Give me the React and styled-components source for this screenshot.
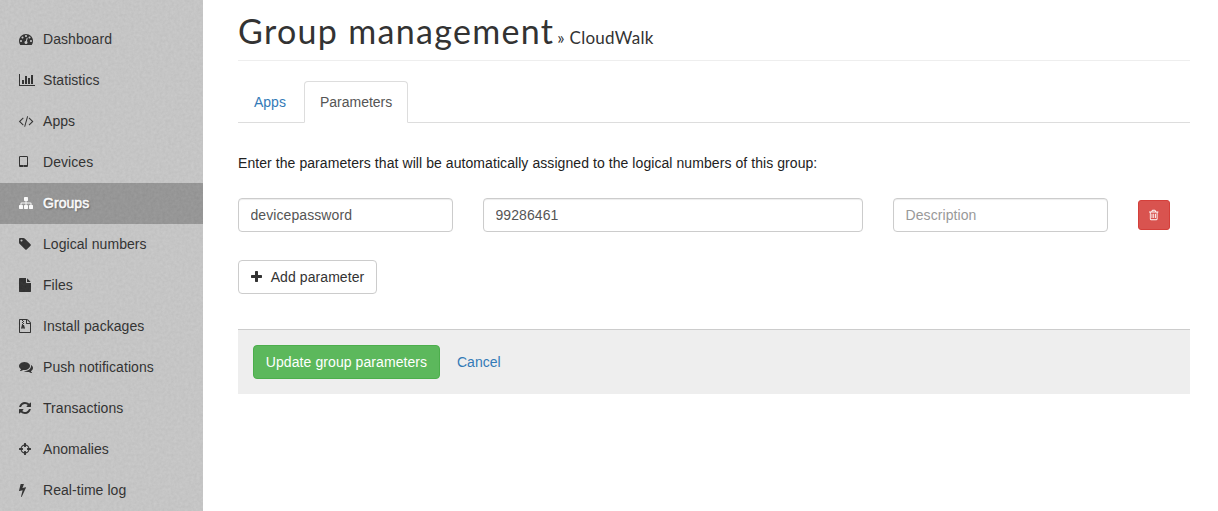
import React from "react";
import styled, { createGlobalStyle } from "styled-components";

const GlobalStyle = createGlobalStyle`
  *, *::before, *::after { box-sizing: border-box; }
  html, body { margin: 0; background: #fff; }
  body {
    font-family: "Liberation Sans", Helvetica, Arial, sans-serif;
    font-size: 14px;
    line-height: 20px;
    color: #222;
    overflow: hidden;
  }
  button, input { font: inherit; }
`;

const Page = styled.div`
  display: flex;
  height: 511px;
`;

const Sidebar = styled.nav`
  position: relative;
  flex: none;
  width: 203px;
  padding-top: 19px;
  background: #c7c7c7;
  overflow: hidden;
`;

const Texture = styled.svg`
  position: absolute;
  inset: 0;
  width: 100%;
  height: 100%;
  pointer-events: none;
`;

const NavItem = styled.a`
  display: flex;
  align-items: center;
  height: 41px;
  padding: 0 0 2px 19px;
  letter-spacing: 0.06px;
  color: ${(p) => (p.$active ? "#fff" : "#2f2f2f")};
  background: ${(p) => (p.$active ? "#969696" : "transparent")};
  -webkit-text-stroke: ${(p) => (p.$active ? "0.5px #fff" : "0")};
  text-shadow: ${(p) => (p.$active ? "1px 1px 2px rgba(0, 0, 0, 0.5)" : "none")};
  text-decoration: none;
`;

const NavIcon = styled.span`
  display: flex;
  width: 24px;
`;

const Glyph = styled.svg`
  display: block;
  flex: none;
  height: ${(p) => p.$size}px;
  width: auto;
  fill: currentColor;
  overflow: visible;
`;

const Main = styled.main`
  flex: 1;
  padding: 0 28px 0 35px;
`;

const Header = styled.header`
  display: flex;
  align-items: baseline;
  height: 61px;
  padding-top: 11px;
  border-bottom: 1px solid #eee;
  font-family: Lato, "Open Sans", sans-serif;
  color: #333;
  white-space: nowrap;
`;

const Title = styled.h1`
  margin: 0;
  font-size: 34px;
  font-weight: 400;
  line-height: 40px;
  letter-spacing: 1.32px;
`;

const Crumb = styled.span`
  margin-left: 3px;
  font-size: 17px;
  letter-spacing: 0.28px;
`;

const Tabs = styled.div`
  display: flex;
  height: 42px;
  margin-top: 20px;
  border-bottom: 1px solid #ddd;
`;

const Tab = styled.a`
  height: 42px;
  margin-right: 2px;
  padding: 10px 15px;
  border: 1px solid ${(p) => (p.$active ? "#ddd" : "transparent")};
  border-bottom-color: ${(p) => (p.$active ? "#fff" : "transparent")};
  border-radius: 4px 4px 0 0;
  background: ${(p) => (p.$active ? "#fff" : "transparent")};
  color: ${(p) => (p.$active ? "#555" : "#337ab7")};
`;

const Intro = styled.p`
  margin: 30px 0 25px;
  letter-spacing: 0.07px;
`;

const ParameterRow = styled.div`
  display: flex;
  gap: 30px;
  align-items: center;
`;

const Field = styled.input`
  width: ${(p) => p.$width}px;
  height: 34px;
  padding: 6px 11.5px;
  letter-spacing: 0.08px;
  border: 1px solid #ccc;
  border-radius: 4px;
  background: #fff;
  box-shadow: inset 0 1px 1px rgba(0, 0, 0, 0.075);
  color: #555;
  &::placeholder { color: #999; opacity: 1; }
`;

const Button = styled.button`
  display: inline-flex;
  align-items: center;
  justify-content: center;
  height: 34px;
  padding: 0 12px;
  border: 1px solid #ccc;
  border-radius: 4px;
  background: #fff;
  color: #333;
  letter-spacing: 0.08px;
  white-space: nowrap;
`;

const AddButton = styled(Button)`
  width: 139px;
  margin-top: 28px;
  gap: 9px;
`;

const DeleteButton = styled(Button)`
  width: 32px;
  height: 30px;
  padding: 0;
  border-color: #d43f3a;
  border-radius: 3px;
  background: #d9534f;
  color: #fff;
`;

const SaveButton = styled(Button)`
  width: 187px;
  border-color: #4cae4c;
  background: #5cb85c;
  color: #fff;
`;

const FormActions = styled.footer`
  display: flex;
  align-items: center;
  gap: 17px;
  height: 65px;
  margin-top: 35px;
  padding-left: 15px;
  border-top: 1px solid #ccc;
  background: #eee;
`;

const Link = styled.a`
  color: #337ab7;
`;

const ICONS = {
  dashboard: ["0 0 1792 1792", "M384 1152q0-53-37.5-90.5t-90.5-37.5-90.5 37.5-37.5 90.5 37.5 90.5 90.5 37.5 90.5-37.5 37.5-90.5zm192-448q0-53-37.5-90.5t-90.5-37.5-90.5 37.5-37.5 90.5 37.5 90.5 90.5 37.5 90.5-37.5 37.5-90.5zm428 481l101-382q6-26-7.5-48.5t-38.5-29.5-48 6.5-30 39.5l-101 382q-60 5-107 43.5t-63 98.5q-20 77 20 146t117 89 146-20 89-117q16-60-6-117t-72-91zm660-33q0-53-37.5-90.5t-90.5-37.5-90.5 37.5-37.5 90.5 37.5 90.5 90.5 37.5 90.5-37.5 37.5-90.5zm-640-640q0-53-37.5-90.5t-90.5-37.5-90.5 37.5-37.5 90.5 37.5 90.5 90.5 37.5 90.5-37.5 37.5-90.5zm448 192q0-53-37.5-90.5t-90.5-37.5-90.5 37.5-37.5 90.5 37.5 90.5 90.5 37.5 90.5-37.5 37.5-90.5zm320 448q0 261-141 483-19 29-54 29h-1402q-35 0-54-29-141-221-141-483 0-182 71-348t191-286 286-191 348-71 348 71 286 191 191 286 71 348z"],
  chart: ["0 0 2048 1792", "M640 896v512h-256v-512h256zm384-512v1024h-256v-1024h256zm1024 1152v128h-2048v-1536h128v1408h1920zm-640-896v768h-256v-768h256zm384-384v1152h-256v-1152h256z"],
  code: ["-19 0 1830 1792", "M553 1399l-50 50q-10 10-23 10t-23-10l-466-466q-10-10-10-23t10-23l466-466q10-10 23-10t23 10l50 50q10 10 10 23t-10 23l-393 393 393 393q10 10 10 23t-10 23zm591-1067l-373 1291q-4 13-15.5 19.5t-23.5 2.5l-62-17q-13-4-19.5-15.5t-2.5-24.5l373-1291q4-13 15.5-19.5t23.5-2.5l62 17q13 4 19.5 15.5t2.5 24.5zm657 651l-466 466q-10 10-23 10t-23-10l-50-50q-10-10-10-23t10-23l393-393-393-393q-10-10-10-23t10-23l50-50q10-10 23-10t23 10l466 466q10 10 10 23t-10 23z"],
  tablet: ["320 0 1152 1792", "M960 1408q0-26-19-45t-45-19-45 19-19 45 19 45 45 19 45-19 19-45zm384-160v-960q0-13-9.5-22.5t-22.5-9.5h-832q-13 0-22.5 9.5t-9.5 22.5v960q0 13 9.5 22.5t22.5 9.5h832q13 0 22.5-9.5t9.5-22.5zm128-960v1088q0 66-47 113t-113 47h-832q-66 0-113-47t-47-113v-1088q0-66 47-113t113-47h832q66 0 113 47t47 113z"],
  sitemap: ["0 0 1792 1792", "M1792 1248v320q0 40-28 68t-68 28h-320q-40 0-68-28t-28-68v-320q0-40 28-68t68-28h96v-192h-512v192h96q40 0 68 28t28 68v320q0 40-28 68t-68 28h-320q-40 0-68-28t-28-68v-320q0-40 28-68t68-28h96v-192h-512v192h96q40 0 68 28t28 68v320q0 40-28 68t-68 28h-320q-40 0-68-28t-28-68v-320q0-40 28-68t68-28h96v-192q0-52 38-90t90-38h512v-192h-96q-40 0-68-28t-28-68v-320q0-40 28-68t68-28h320q40 0 68 28t28 68v320q0 40-28 68t-68 28h-96v192h512q52 0 90 38t38 90v192h96q40 0 68 28t28 68z"],
  tag: ["128 0 1536 1792", "M576 448q0-53-37.5-90.5t-90.5-37.5-90.5 37.5-37.5 90.5 37.5 90.5 90.5 37.5 90.5-37.5 37.5-90.5zm1067 576q0 53-37 90l-491 492q-39 37-91 37-53 0-90-37l-715-716q-38-37-64.5-101t-26.5-117v-416q0-52 38-90t90-38h416q53 0 117 26.5t102 64.5l715 714q37 39 37 91z"],
  file: ["128 0 1536 1792", "M1152 512v-472q22 14 36 28l408 408q14 14 28 36h-472zm-128 32q0 40 28 68t68 28h544v1056q0 40-28 68t-68 28h-1344q-40 0-68-28t-28-68v-1600q0-40 28-68t68-28h800v544z"],
  archive: ["128 0 1536 1792", "M1596 380q28 28 48 76t20 88v1152q0 40-28 68t-68 28h-1344q-40 0-68-28t-28-68v-1600q0-40 28-68t68-28h896q40 0 88 20t76 48zm-444-244v376h376q-10-29-22-41l-313-313q-12-12-41-22zm384 1528v-1024h-416q-40 0-68-28t-28-68v-416h-768v1536h1280zM512 128h128v128h-128zM640 256h128v128h-128zM512 384h128v128h-128zM640 512h128v128h-128zM512 640h128v128h128l107 349q21 67-44 121t-191 54-191-54-44-121l107-379zm128 480q-53 0-90.500 19t-37.500 45 37.500 45 90.500 19 90.500-19 37.500-45-37.500-45-90.500-19z"],
  comments: ["0 0 1792 1792", "M1408 768q0 139-94 257t-256.500 186.500-353.500 68.500q-86 0-176-16-124 88-278 128-36 9-86 16h-3q-11 0-20.500-8t-11.500-21q-1-3-1-6.500t.5-6.500 2-6l2.500-5 3.500-5.500 4-5 4.500-5 4-4.500q5-6 23-25t26-29.500 22.500-29 25-38.500 20.500-44q-124-72-195-177t-71-224q0-139 94-257t256.500-186.500 353.500-68.500 353.500 68.500 256.500 186.500 94 257zm384 256q0 120-71 224.500t-195 176.500q10 24 20.500 44t25 38.500 22.500 29 26 29.500 23 25q1 1 4 4.500t4.500 5 4 5 3.500 5.500l2.500 5 2 6 .5 6.500-1 6.500q-3 14-13 22t-22 7q-50-7-86-16-154-40-278-128-90 16-176 16-271 0-472-132 58 4 88 4 161 0 309-45t264-129q125-92 192-212t67-254q0-77-23-152 129 71 204 178t75 230z"],
  refresh: ["128 0 1536 1792", "M1639 1056q0 5-1 7-64 268-268 434.500t-478 166.500q-146 0-282.500-55t-243.500-157l-129 129q-19 19-45 19t-45-19-19-45v-448q0-26 19-45t45-19h448q26 0 45 19t19 45-19 45l-137 137q71 66 161 102t187 36q134 0 250-65t186-179q11-17 53-117 8-23 30-23h192q13 0 22.500 9.500t9.500 22.500zm25-800v448q0 26-19 45t-45 19h-448q-26 0-45-19t-19-45 19-45l138-138q-148-137-349-137-134 0-250 65t-186 179q-11 17-53 117-8 23-30 23h-199q-13 0-22.500-9.500t-9.500-22.500v-7q65-268 270-434.500t480-166.500q146 0 284 55.500t245 156.500l130-129q19-19 45-19t45 19 19 45z"],
  crosshairs: ["128 0 1536 1792", "M1325 1024h-109q-26 0-45-19t-19-45v-128q0-26 19-45t45-19h109q-32-108-112.500-188.500t-188.500-112.500v109q0 26-19 45t-45 19h-128q-26 0-45-19t-19-45v-109q-108 32-188.500 112.500t-112.500 188.500h109q26 0 45 19t19 45v128q0 26-19 45t-45 19h-109q32 108 112.500 188.500t188.500 112.500v-109q0-26 19-45t45-19h128q26 0 45 19t19 45v109q108-32 188.500-112.500t112.500-188.500zm339-192v128q0 26-19 45t-45 19h-143q-37 161-154.500 278.500t-278.500 154.500v143q0 26-19 45t-45 19h-128q-26 0-45-19t-19-45v-143q-161-37-278.500-154.500t-154.500-278.500h-143q-26 0-45-19t-19-45v-128q0-26 19-45t45-19h143q37-161 154.500-278.500t278.500-154.500v-143q0-26 19-45t45-19h128q26 0 45 19t19 45v143q161 37 278.500 154.500t154.500 278.500h143q26 0 45 19t19 45z"],
  bolt: ["448 0 896 1792", "M1333 566q18 20 7 44l-540 1157q-13 25-42 25-4 0-14-2-17-5-25.500-19t-4.500-30l197-808-406 101q-4 1-12 1-18 0-31-11-18-15-13-39l201-825q4-14 16-23t28-9h328q19 0 32 12.500t13 29.500q0 8-5 18l-171 463 396-98q8-2 12-2 19 0 34 15z"],
  plus: ["192 0 1408 1792", "M1600 736v192q0 40-28 68t-68 28h-416v416q0 40-28 68t-68 28h-192q-40 0-68-28t-28-68v-416h-416q-40 0-68-28t-28-68v-192q0-40 28-68t68-28h416v-416q0-40 28-68t68-28h192q40 0 68 28t28 68v416h416q40 0 68 28t28 68z"],
  trash: ["192 0 1408 1792", "M704 736v576q0 14-9 23t-23 9h-64q-14 0-23-9t-9-23v-576q0-14 9-23t23-9h64q14 0 23 9t9 23zm256 0v576q0 14-9 23t-23 9h-64q-14 0-23-9t-9-23v-576q0-14 9-23t23-9h64q14 0 23 9t9 23zm256 0v576q0 14-9 23t-23 9h-64q-14 0-23-9t-9-23v-576q0-14 9-23t23-9h64q14 0 23 9t9 23zm128 724v-948h-896v948q0 22 7 40.500t14.500 27 10.500 8.500h832q3 0 10.500-8.500t14.500-27 7-40.500zm-672-1076h448l-48-117q-7-9-17-11h-317q-10 2-17 11zm928 32v64q0 14-9 23t-23 9h-96v948q0 83-47 143.500t-113 60.500h-832q-66 0-113-58.500t-47-141.500v-952h-96q-14 0-23-9t-9-23v-64q0-14 9-23t23-9h309l70-167q15-37 54-63t79-26h320q40 0 79 26t54 63l70 167h309q14 0 23 9t9 23z"],
};

function Icon({ name, size = 14 }) {
  const [viewBox, d] = ICONS[name];
  return (
    <Glyph viewBox={viewBox} $size={size} aria-hidden="true">
      <path d={d} />
    </Glyph>
  );
}

const NAV = [
  ["dashboard", "Dashboard"],
  ["chart", "Statistics"],
  ["code", "Apps"],
  ["tablet", "Devices"],
  ["sitemap", "Groups"],
  ["tag", "Logical numbers"],
  ["file", "Files"],
  ["archive", "Install packages"],
  ["comments", "Push notifications"],
  ["refresh", "Transactions"],
  ["crosshairs", "Anomalies"],
  ["bolt", "Real-time log"],
];

export default function App() {
  return (
    <Page>
      <GlobalStyle />
      <Sidebar>
        {NAV.map(([icon, label]) => (
          <NavItem key={label} $active={label === "Groups"}>
            <NavIcon><Icon name={icon} /></NavIcon>
            {label}
          </NavItem>
        ))}
        <Texture aria-hidden="true">
          <filter id="grain" x="0" y="0" width="100%" height="100%" colorInterpolationFilters="sRGB">
            <feTurbulence type="fractalNoise" baseFrequency="0.35" numOctaves="3" seed="4" />
            <feColorMatrix values="1.2 0 0 0 0  1.2 0 0 0 0  1.2 0 0 0 0  0 0 0 0 0.045" />
          </filter>
          <rect width="100%" height="100%" filter="url(#grain)" />
        </Texture>
      </Sidebar>
      <Main>
        <Header>
          <Title>Group management</Title>
          <Crumb>» CloudWalk</Crumb>
        </Header>
        <Tabs>
          <Tab>Apps</Tab>
          <Tab $active>Parameters</Tab>
        </Tabs>
        <Intro>Enter the parameters that will be automatically assigned to the logical numbers of this group:</Intro>
        <ParameterRow>
          <Field $width={215} defaultValue="devicepassword" />
          <Field $width={380} defaultValue="99286461" />
          <Field $width={215} placeholder="Description" />
          <DeleteButton aria-label="Delete"><Icon name="trash" size={12} /></DeleteButton>
        </ParameterRow>
        <AddButton><Icon name="plus" />Add parameter</AddButton>
        <FormActions>
          <SaveButton>Update group parameters</SaveButton>
          <Link>Cancel</Link>
        </FormActions>
      </Main>
    </Page>
  );
}
